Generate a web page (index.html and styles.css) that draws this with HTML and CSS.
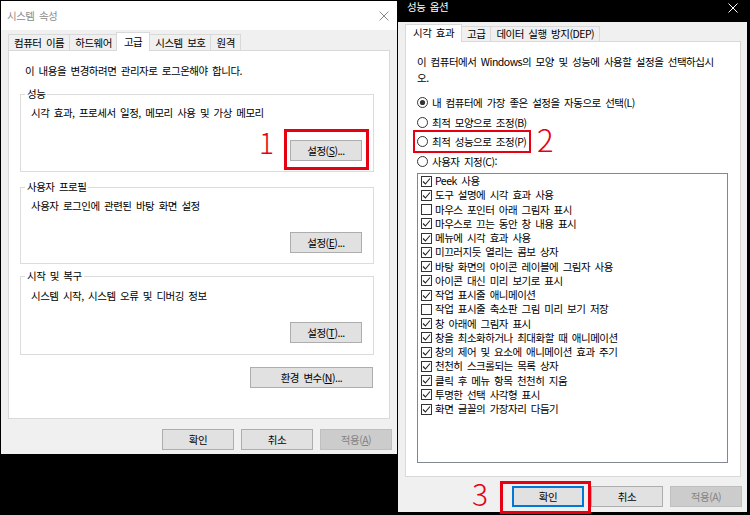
FILE: index.html
```html
<!DOCTYPE html>
<html lang="ko">
<head>
<meta charset="utf-8">
<title>시스템 속성 / 성능 옵션</title>
<link rel="stylesheet" href="styles.css">
</head>
<body>
<div class="screen">
  <section class="win win-sys">
    <div class="titlebar">
      <span class="title">시스템 속성</span>
      <svg class="close" width="10" height="10" viewBox="0 0 10 10"><path d="M0.5 0.5 L9.5 9.5 M9.5 0.5 L0.5 9.5" stroke="#8c8c8c" stroke-width="1" fill="none"/></svg>
    </div>
    <div class="tabs">
      <div class="tab">컴퓨터 이름</div>
      <div class="tab">하드웨어</div>
      <div class="tab active">고급</div>
      <div class="tab">시스템 보호</div>
      <div class="tab">원격</div>
    </div>
    <div class="panel sys-panel">
      <p class="notice">이 내용을 변경하려면 관리자로 로그온해야 합니다.</p>
      <fieldset class="group g1">
        <legend>성능</legend>
        <p class="gtext">시각 효과, 프로세서 일정, 메모리 사용 및 가상 메모리</p>
        <div class="gbtn"><button class="btn">설정(<u>S</u>)...</button></div>
      </fieldset>
      <fieldset class="group g2">
        <legend>사용자 프로필</legend>
        <p class="gtext">사용자 로그인에 관련된 바탕 화면 설정</p>
        <div class="gbtn"><button class="btn">설정(<u>E</u>)...</button></div>
      </fieldset>
      <fieldset class="group g3">
        <legend>시작 및 복구</legend>
        <p class="gtext">시스템 시작, 시스템 오류 및 디버깅 정보</p>
        <div class="gbtn"><button class="btn">설정(<u>T</u>)...</button></div>
      </fieldset>
      <div class="envrow"><button class="btn btn-env">환경 변수(<u>N</u>)...</button></div>
    </div>
    <div class="actions sys-actions">
      <button class="btn">확인</button>
      <button class="btn">취소</button>
      <button class="btn disabled">적용(<u>A</u>)</button>
    </div>
    <div class="mark mark1"></div>
    <div class="num num1">1</div>
  </section>

  <section class="win win-perf">
    <div class="titlebar dark">
      <span class="title">성능 옵션</span>
      <svg class="close" width="10" height="10" viewBox="0 0 10 10"><path d="M0.5 0.5 L9.5 9.5 M9.5 0.5 L0.5 9.5" stroke="#ffffff" stroke-width="1" fill="none"/></svg>
    </div>
    <div class="tabs perf-tabs">
      <div class="tab active">시각 효과</div>
      <div class="tab">고급</div>
      <div class="tab">데이터 실행 방지(DEP)</div>
    </div>
    <div class="panel perf-panel">
      <p class="intro">이 컴퓨터에서 Windows의 모양 및 성능에 사용할 설정을 선택하십시<br>오.</p>
      <div class="radios">
        <div class="radio checked"><svg width="11" height="11" viewBox="0 0 11 11"><circle cx="5.5" cy="5.5" r="5" fill="#fff" stroke="#333"/><circle cx="5.5" cy="5.5" r="2.6" fill="#333"/></svg><span>내 컴퓨터에 가장 좋은 설정을 자동으로 선택(L)</span></div>
        <div class="radio"><svg width="11" height="11" viewBox="0 0 11 11"><circle cx="5.5" cy="5.5" r="5" fill="#fff" stroke="#333"/></svg><span>최적 모양으로 조정(B)</span></div>
        <div class="radio"><svg width="11" height="11" viewBox="0 0 11 11"><circle cx="5.5" cy="5.5" r="5" fill="#fff" stroke="#333"/></svg><span>최적 성능으로 조정(P)</span></div>
        <div class="radio"><svg width="11" height="11" viewBox="0 0 11 11"><circle cx="5.5" cy="5.5" r="5" fill="#fff" stroke="#333"/></svg><span>사용자 지정(C):</span></div>
      </div>
      <ul class="list">
        <li class="on"><i class="cb"></i>Peek 사용</li>
        <li class="on"><i class="cb"></i>도구 설명에 시각 효과 사용</li>
        <li><i class="cb"></i>마우스 포인터 아래 그림자 표시</li>
        <li class="on"><i class="cb"></i>마우스로 끄는 동안 창 내용 표시</li>
        <li class="on"><i class="cb"></i>메뉴에 시각 효과 사용</li>
        <li class="on"><i class="cb"></i>미끄러지듯 열리는 콤보 상자</li>
        <li class="on"><i class="cb"></i>바탕 화면의 아이콘 레이블에 그림자 사용</li>
        <li class="on"><i class="cb"></i>아이콘 대신 미리 보기로 표시</li>
        <li class="on"><i class="cb"></i>작업 표시줄 애니메이션</li>
        <li><i class="cb"></i>작업 표시줄 축소판 그림 미리 보기 저장</li>
        <li class="on"><i class="cb"></i>창 아래에 그림자 표시</li>
        <li class="on"><i class="cb"></i>창을 최소화하거나 최대화할 때 애니메이션</li>
        <li class="on"><i class="cb"></i>창의 제어 및 요소에 애니메이션 효과 주기</li>
        <li class="on"><i class="cb"></i>천천히 스크롤되는 목록 상자</li>
        <li class="on"><i class="cb"></i>클릭 후 메뉴 항목 천천히 지움</li>
        <li class="on"><i class="cb"></i>투명한 선택 사각형 표시</li>
        <li class="on"><i class="cb"></i>화면 글꼴의 가장자리 다듬기</li>
      </ul>
    </div>
    <div class="actions perf-actions">
      <button class="btn default">확인</button>
      <button class="btn">취소</button>
      <button class="btn disabled">적용(A)</button>
    </div>
    <div class="mark mark2"></div>
    <div class="num num2">2</div>
    <div class="mark mark3"></div>
    <div class="num num3">3</div>
  </section>
</div>
</body>
</html>
```

FILE: styles.css
```css
* { box-sizing: border-box; }
html, body { margin: 0; padding: 0; }
body {
  background: #000;
  width: 750px;
  height: 515px;
  overflow: hidden;
  font-family: "Noto Sans CJK KR", "Noto Sans", sans-serif;
  font-size: 10.5px;
  letter-spacing: -0.5px;
  word-spacing: 2px;
  color: #000;
}
p { margin: 0; }
.screen { display: flex; align-items: flex-start; height: 515px; }

.win { position: relative; background: #f0f0f0; display: flex; flex-direction: column; }
.win-sys { margin: 1px 0 0 1px; width: 396px; height: 453px; }
.win-perf { margin-left: 1px; width: 349px; height: 512px; }

.titlebar {
  height: 29px; background: #fff; display: flex; align-items: center;
  justify-content: space-between; padding: 0 8px 0 6px; flex: none;
}
.titlebar .title { color: #8c8c8c; line-height: 14px; }
.titlebar.dark { background: #000; height: 22px; align-items: flex-start; padding: 0 9px 0 9px; }
.titlebar.dark .title { color: #fff; line-height: 14px; }
.titlebar.dark .close { margin-top: 3px; }

.tabs { display: flex; align-items: flex-end; height: 20px; padding-left: 7px; flex: none; }
.tab {
  height: 16px; line-height: 15px; padding: 0 5px;
  border: 1px solid #d9d9d9; border-bottom: none; background: #f0f0f0;
  margin-right: -1px; white-space: nowrap;
}
.tab.active {
  height: 19px; margin-bottom: -1px; background: #fff; position: relative; z-index: 1;
  line-height: 17px; padding: 0 7px; margin-left: -1px;
}
.perf-tabs { height: 19px; }
.perf-tabs .tab { height: 15px; line-height: 14px; }
.perf-tabs .tab.active { height: 18px; line-height: 16px; margin-left: 0; }

.panel { background: #fff; border: 1px solid #d9d9d9; flex: none; }
.sys-panel { margin: 0 7px; height: 369px; padding: 0 15px 0 11px; }
.notice { margin-top: 13px; padding-left: 5px; line-height: 14px; }

.group { margin: 0; padding: 0 11px 0 10px; border: 1px solid #dcdcdc; min-width: 0; }
.group legend { padding: 0 2px; margin-left: -6px; line-height: 14px; }
.gtext { line-height: 14px; margin-top: 5px; }
.gbtn { display: flex; justify-content: flex-end; margin-top: 20px; }
.g1 { margin-top: 9px; padding-bottom: 10px; }
.g2 { margin-top: 8px; padding-bottom: 10px; }
.g2 .gbtn { margin-top: 19px; }
.g3 { margin-top: 5px; padding-bottom: 11px; }
.g3 .gtext { margin-top: 6px; }
.g3 .gbtn { margin-top: 19px; }
.envrow { display: flex; justify-content: flex-end; margin-top: 12px; padding-right: 1px; }

.btn {
  font: inherit; letter-spacing: inherit; word-spacing: inherit; color: #000;
  width: 72px; height: 21px; padding: 0; margin: 0;
  background: #e1e1e1; border: 1px solid #adadad; line-height: 18px;
  text-align: center; white-space: nowrap;
}
.btn u { text-underline-offset: 1px; }
.btn-env { width: 123px; }
.btn.disabled { background: #cccccc; border-color: #bfbfbf; color: #838383; }
.btn.default { border-color: #0078d7; box-shadow: inset 0 0 0 1px #0078d7; }

.actions { display: flex; justify-content: flex-end; gap: 7px; flex: none; }
.sys-actions { padding: 10px 5px 0 0; }
.perf-actions { padding: 9px 5px 0 0; }

.perf-panel { margin: 0 6px 0 7px; height: 436px; padding: 0 0 0 11px; }
.intro { margin-top: 12px; line-height: 15.5px; white-space: nowrap; }
.radios { margin-top: 8px; }
.radio { height: 19.5px; display: flex; align-items: center; gap: 4px; }
.radio svg { flex: none; }
.list {
  list-style: none; margin: 2px 0 0 0; padding: 0 0 0 3px;
  width: 311px; height: 290px; border: 1px solid #828790; background: #fff;
}
.list li { height: 14.25px; line-height: 14.25px; display: flex; align-items: center; gap: 3px; white-space: nowrap; }
.cb {
  width: 11px; height: 11px; border: 1px solid #333; background: #fff; flex: none;
}
.list li.on .cb {
  background: #fff url("data:image/svg+xml;utf8,<svg xmlns='http://www.w3.org/2000/svg' width='9' height='9' viewBox='0 0 9 9'><path d='M1 4.5 L3.4 7 L8 1.5' fill='none' stroke='%23222' stroke-width='1.1'/></svg>") no-repeat center;
}

.mark { position: absolute; border: 3px solid #e60012; }
.mark1 { left: 283px; top: 128px; width: 85px; height: 41px; }
.mark2 { left: 15px; top: 130px; width: 118px; height: 23px; border-width: 2px; }
.mark3 { left: 102px; top: 481px; width: 91px; height: 33px; }
.num {
  position: absolute; color: #e60012; font-family: "Noto Sans CJK KR", sans-serif;
  font-weight: 300; letter-spacing: 0;
}
.num1 { left: 258px; top: 127px; font-size: 28px; line-height: 28px; }
.num2 { left: 139px; top: 123px; font-size: 31px; line-height: 31px; }
.num3 { left: 74px; top: 478px; font-size: 30px; line-height: 30px; }
```
